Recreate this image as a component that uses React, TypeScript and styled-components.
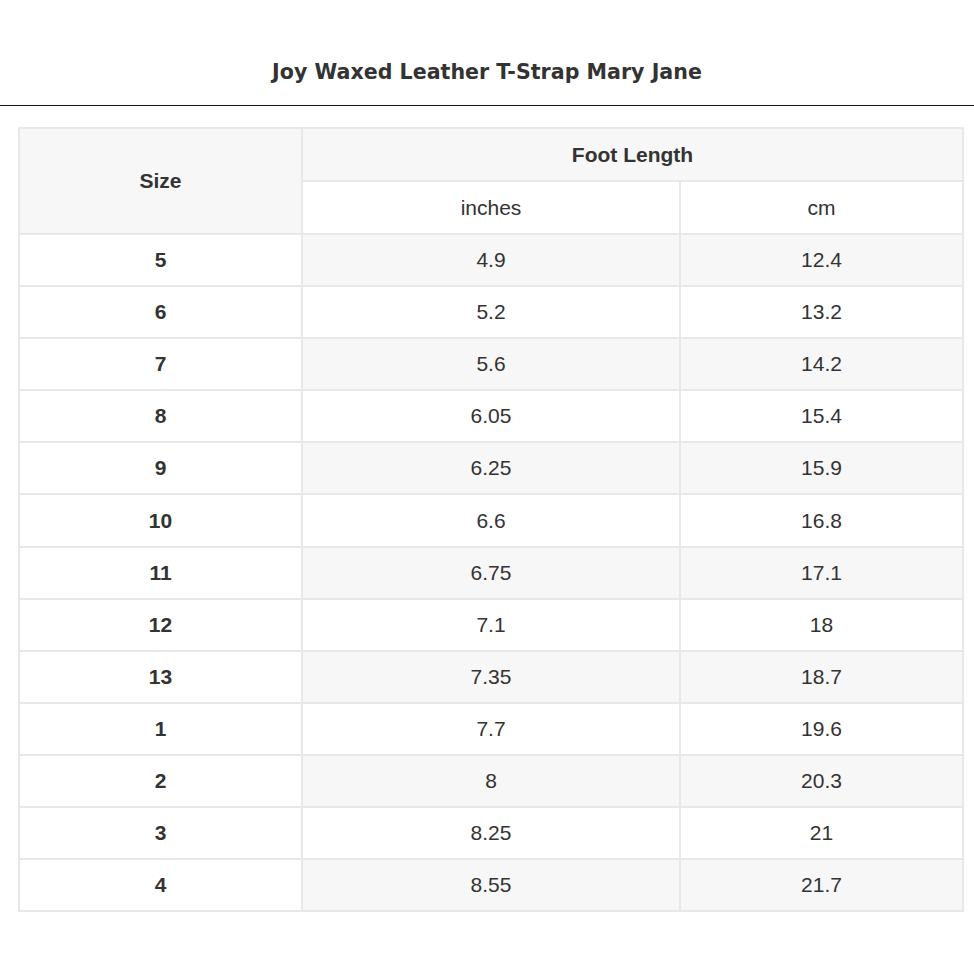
import React from "react";
import styled, { createGlobalStyle } from "styled-components";

const Global = createGlobalStyle`
  html, body { margin: 0; padding: 0; background: #fff; }
  body { font-family: "Liberation Sans", Arial, sans-serif; color: #333; }
`;

const Page = styled.div`
  width: 974px;
  height: 974px;
  background: #fff;
`;

const Header = styled.header`
  height: 106px;
  border-bottom: 1px solid #111;
  display: flex;
  align-items: center;
  justify-content: center;
  box-sizing: border-box;
`;

const Title = styled.h1`
  margin: 0;
  padding-top: 38px;
  font-family: "DejaVu Sans", Verdana, sans-serif;
  font-weight: bold;
  font-size: 20.6px;
  color: #333;
`;

const Wrap = styled.div`
  padding: 21px 12px 0 18px;
`;

const Table = styled.table`
  width: 944px;
  border-collapse: collapse;
  table-layout: fixed;
  font-size: 21px;
  color: #333;
`;

const Cell = styled.td<{ $shade?: boolean; $bold?: boolean; $tall?: boolean }>`
  border: 2px solid #e8e8e8;
  height: ${(p) => (p.$tall ? "51px" : "50px")};
  padding: 0;
  text-align: center;
  vertical-align: middle;
  font-weight: ${(p) => (p.$bold ? "bold" : "normal")};
  background: ${(p) => (p.$shade ? "#f7f7f7" : "#fff")};
`;

const rows: [string, string, string][] = [
  ["5", "4.9", "12.4"],
  ["6", "5.2", "13.2"],
  ["7", "5.6", "14.2"],
  ["8", "6.05", "15.4"],
  ["9", "6.25", "15.9"],
  ["10", "6.6", "16.8"],
  ["11", "6.75", "17.1"],
  ["12", "7.1", "18"],
  ["13", "7.35", "18.7"],
  ["1", "7.7", "19.6"],
  ["2", "8", "20.3"],
  ["3", "8.25", "21"],
  ["4", "8.55", "21.7"],
];

export default function App() {
  return (
    <Page>
      <Global />
      <Header>
        <Title>Joy Waxed Leather T-Strap Mary Jane</Title>
      </Header>
      <Wrap>
        <Table>
          <colgroup>
            <col style={{ width: 283 }} />
            <col style={{ width: 378 }} />
            <col style={{ width: 283 }} />
          </colgroup>
          <thead>
            <tr>
              <Cell as="th" rowSpan={2} $shade $bold $tall>
                Size
              </Cell>
              <Cell as="th" colSpan={2} $shade $bold $tall>
                Foot Length
              </Cell>
            </tr>
            <tr>
              <Cell as="th" $tall>inches</Cell>
              <Cell as="th" $tall>cm</Cell>
            </tr>
          </thead>
          <tbody>
            {rows.map(([s, i, c], idx) => (
              <tr key={idx}>
                <Cell $bold $tall={idx === 5}>{s}</Cell>
                <Cell $shade={idx % 2 === 0} $tall={idx === 5}>{i}</Cell>
                <Cell $shade={idx % 2 === 0} $tall={idx === 5}>{c}</Cell>
              </tr>
            ))}
          </tbody>
        </Table>
      </Wrap>
    </Page>
  );
}
